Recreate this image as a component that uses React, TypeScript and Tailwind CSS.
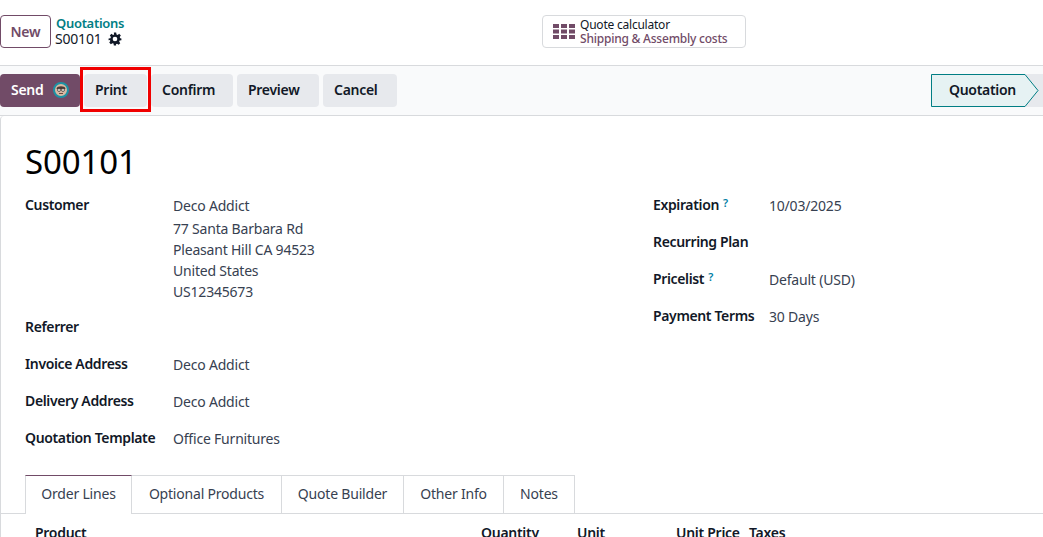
import React from "react";

const Row = ({ label, help, children, h, lw }: { label: string; help?: boolean; children?: React.ReactNode; h: string; lw: string }) => (
  <div className={`flex ${h}`}>
    <div className={`${lw} shrink-0 font-semibold text-[#111827] leading-[21px] tracking-[-0.36px]`}>
      {label}
      {help && <sup className="text-[#0180a5] ml-[4px] font-semibold text-[11px] leading-none relative -top-[3px]">?</sup>}
    </div>
    <div className="text-[#374151] leading-[21px] pt-[1px]">{children}</div>
  </div>
);

const Gear = () => (
  <svg width="14" height="14" viewBox="0 0 24 24" fill="#111827">
    <path fillRule="evenodd" d="M10 1h4l.6 3.2 1.9.8 2.7-1.9 2.8 2.8-1.9 2.7.8 1.9L23 11v3l-3.1.5-.8 1.9 1.9 2.7-2.8 2.8-2.7-1.9-1.9.8L14 23h-4l-.5-3.1-1.9-.8-2.7 1.9-2.8-2.8 1.9-2.7-.8-1.9L1 14v-3l3.2-.5.8-1.9L3.1 5.9l2.8-2.8 2.7 1.9 1.9-.8L10 1zm2 7a4 4 0 1 0 0 8 4 4 0 0 0 0-8z" />
  </svg>
);

const Avatar = () => (
  <svg width="16" height="16" viewBox="0 0 16 16">
    <circle cx="8" cy="8" r="7" fill="#d9b9a3" stroke="#1c93a5" strokeWidth="2" />
    <path d="M3.5 6.5C4 3.5 12 3.5 12.5 6.5L12 7H4z" fill="#4a3b35" />
    <circle cx="6" cy="8" r="1.5" fill="#f1e6dd" stroke="#333" strokeWidth=".7" />
    <circle cx="10" cy="8" r="1.5" fill="#f1e6dd" stroke="#333" strokeWidth=".7" />
    <path d="M6 11.5h4" stroke="#6b4a3e" strokeWidth="1" />
  </svg>
);

const ActionBtn = ({ children, w }: { children: React.ReactNode; w: string }) => (
  <button className={`${w} h-[33px] rounded-[4px] bg-[#e7e9ed] text-[#111827] font-semibold tracking-[-0.28px] flex items-center pl-[11px] pb-[2px]`}>{children}</button>
);

const Tab = ({ children, active, w }: { children: React.ReactNode; active?: boolean; w: string }) => (
  <div
    className={`${w} h-[38px] flex items-center justify-center text-[#374151] pb-[3px] border-t border-r border-[#d8dadd] ${
      active ? "border-l border-t-[#714b67] bg-white h-[39px] -mb-[1px] text-[#111827]" : ""
    }`}
  >
    {children}
  </div>
);

export default function App() {
  return (
    <div className="w-[1043px] h-[537px] overflow-hidden bg-white text-[14px] tracking-[-0.2px] font-['Noto_Sans',sans-serif] relative">
      <header className="h-[66px] border-b border-[#d8dadd] flex items-start pt-[15px]">
        <button className="w-[51px] h-[33px] border border-[#714b67] rounded-[4px] text-[#714b67] font-semibold">New</button>
        <div className="ml-[4px] leading-[16px] w-[487px]">
          <div className="text-[#017e84] font-semibold text-[13px] tracking-[-0.3px] pl-[1px]">Quotations</div>
          <div className="flex items-center gap-[6px] text-[#111827]">
            S00101 <Gear />
          </div>
        </div>
        <div className="w-[204px] h-[33px] border border-[#d8dadd] rounded-[4px] flex items-center pl-[10px] gap-[5px]">
          <svg width="22" height="15" viewBox="0 0 22 15" fill="#714b67">
            <rect x="0" y="0" width="6" height="4" /><rect x="8" y="0" width="6" height="4" /><rect x="16" y="0" width="6" height="4" />
            <rect x="0" y="5.5" width="6" height="4" /><rect x="8" y="5.5" width="6" height="4" /><rect x="16" y="5.5" width="6" height="4" />
            <rect x="0" y="11" width="6" height="4" /><rect x="8" y="11" width="6" height="4" /><rect x="16" y="11" width="6" height="4" />
          </svg>
          <div className="leading-[14px] text-[12px] pt-[1px] tracking-[-0.22px]">
            <div className="text-[#111827]">Quote calculator</div>
            <div className="text-[#714b67] font-medium">Shipping &amp; Assembly costs</div>
          </div>
        </div>
      </header>

      <div className="h-[50px] bg-[#f9fafb] border-b border-[#d8dadd] flex items-center justify-between pb-[1px]">
        <div className="flex gap-[4px]">
          <button className="w-[80px] h-[33px] rounded-[4px] bg-[#714b67] text-white font-semibold tracking-[-0.28px] flex items-center pl-[11px] gap-[10px]">
            <span className="pb-[2px]">Send</span> <Avatar />
          </button>
          <ActionBtn w="w-[63px]">Print</ActionBtn>
          <ActionBtn w="w-[82px]">Confirm</ActionBtn>
          <ActionBtn w="w-[82px]">Preview</ActionBtn>
          <ActionBtn w="w-[74px]">Cancel</ActionBtn>
        </div>
        <div className="flex items-center h-[33px] relative w-[112px] bg-[#e7e9ed]">
          <svg className="absolute left-0 top-0" width="108" height="33" viewBox="0 0 108 33">
            <path d="M.5.5H94L107 16.5 94 32.5H.5z" fill="#e6f2f3" stroke="#017e84" />
          </svg>
          <span className="relative font-semibold text-[#111827] ml-[18px] pb-[2px] tracking-[-0.3px]">Quotation</span>
        </div>
      </div>

      <main className="border-l border-[#d8dadd] pl-[24px] rounded-tl-[4px]">
        <h1 className="text-[33px] leading-[46px] pt-[23px] text-[#000] h-[79px] tracking-[-0.1px]">S00101</h1>
        <div className="flex">
          <div className="w-[628px]">
            <div className="flex h-[121px]">
              <div className="w-[148px] font-semibold text-[#111827] leading-[19px] tracking-[-0.36px]">Customer</div>
              <div className="text-[#374151] leading-[21px]">
                <div className="mb-[2px]">Deco Addict</div>
                <div>77 Santa Barbara Rd</div>
                <div>Pleasant Hill CA 94523</div>
                <div>United States</div>
                <div>US12345673</div>
              </div>
            </div>
            <Row label="Referrer" h="h-[37px]" lw="w-[148px]" />
            <Row label="Invoice Address" h="h-[37px]" lw="w-[148px]">Deco Addict</Row>
            <Row label="Delivery Address" h="h-[37px]" lw="w-[148px]">Deco Addict</Row>
            <Row label="Quotation Template" h="h-[37px]" lw="w-[148px]">Office Furnitures</Row>
          </div>
          <div className="-mt-[1px]">
            <Row label="Expiration" help h="h-[37px]" lw="w-[116px]">10/03/2025</Row>
            <Row label="Recurring Plan" h="h-[37px]" lw="w-[116px]" />
            <Row label="Pricelist" help h="h-[37px]" lw="w-[116px]">Default (USD)</Row>
            <Row label="Payment Terms" h="h-[37px]" lw="w-[116px]">30 Days</Row>
          </div>
        </div>
        <div className="-ml-[24px] mt-[11px] pl-[24px] border-b border-[#d8dadd] flex h-[39px]">
          <Tab active w="w-[107px]">Order Lines</Tab>
          <Tab w="w-[150px]">Optional Products</Tab>
          <Tab w="w-[122px]">Quote Builder</Tab>
          <Tab w="w-[100px]">Other Info</Tab>
          <Tab w="w-[71px]">Notes</Tab>
        </div>
        <div className="h-[30px] font-semibold text-[#111827] flex pt-[9px] leading-[19px] tracking-[-0.28px]">
          <div className="ml-[10px] w-[446px]">Product</div>
          <div className="w-[96px]">Quantity</div>
          <div className="w-[99px]">Unit</div>
          <div className="w-[73px]">Unit Price</div>
          <div>Taxes</div>
        </div>
      </main>

      <div className="absolute left-[80px] top-[67px] w-[71px] h-[45px] border-[3px] border-[#f00000]" />
    </div>
  );
}
